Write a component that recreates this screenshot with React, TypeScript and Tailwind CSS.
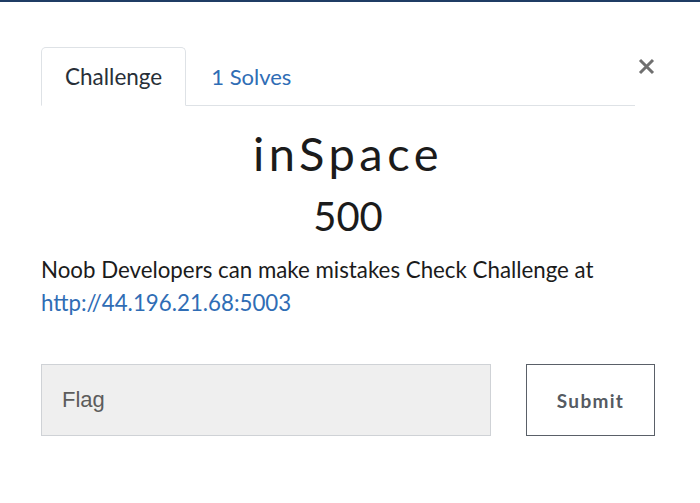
export default function App() {
  const tabs = (
    <div className="flex flex-1 items-end border-b border-[#dee2e6]">
      <div className="-mb-px flex h-[59px] items-center rounded-t-[5px] border border-[#dee2e6] border-b-white bg-white px-[23px] text-[22.5px] text-[#282f38]">
        Challenge
      </div>
      <div className="flex h-[58px] items-center px-[25px] text-[22px] text-[#2f6db5]">
        1 Solves
      </div>
    </div>
  );

  const closeButton = (
    <button className="ml-[3px] mt-[11px] self-start p-0">
      <svg width="17" height="17" viewBox="0 0 17 17">
        <path d="M2 2 L15 15 M15 2 L2 15" stroke="#6f6f6f" strokeWidth="3" />
      </svg>
    </button>
  );

  return (
    <div className="h-[503px] w-[700px] overflow-hidden bg-white font-['Lato',sans-serif]">
      <div className="h-[2px] bg-[#1f3c64]" />
      <div className="pl-[41px] pr-[45px] pt-[45px]">
        <div className="flex">
          {tabs}
          {closeButton}
        </div>
        <div className="mt-[19px] text-center text-[47px] leading-[1.2] tracking-[4.5px] text-[#1b1b1b]">
          inSpace
        </div>
        <div className="mt-[11px] text-center text-[40px] leading-[1.2] text-[#1b1b1b]">
          500
        </div>
        <div className="mt-[12.5px] text-[22.3px] leading-[33px] text-[#1b1b1b]">
          <p>Noob Developers can make mistakes Check Challenge at</p>
          <a className="text-[#2f6db5]">http://44.196.21.68:5003</a>
        </div>
        <div className="mt-[45px] flex gap-[35px]">
          <div className="flex h-[72px] w-[450px] items-center border border-[#cfd2d6] bg-[#efefef] pl-[20px] font-['Liberation_Sans',sans-serif] text-[22px] text-[#5c5c5c]">
            Flag
          </div>
          <button className="flex h-[72px] w-[129px] items-center justify-center border border-[#5a6068] bg-white pt-[2px] text-[19px] font-bold tracking-[1.3px] text-[#555b62]">
            Submit
          </button>
        </div>
      </div>
    </div>
  );
}
